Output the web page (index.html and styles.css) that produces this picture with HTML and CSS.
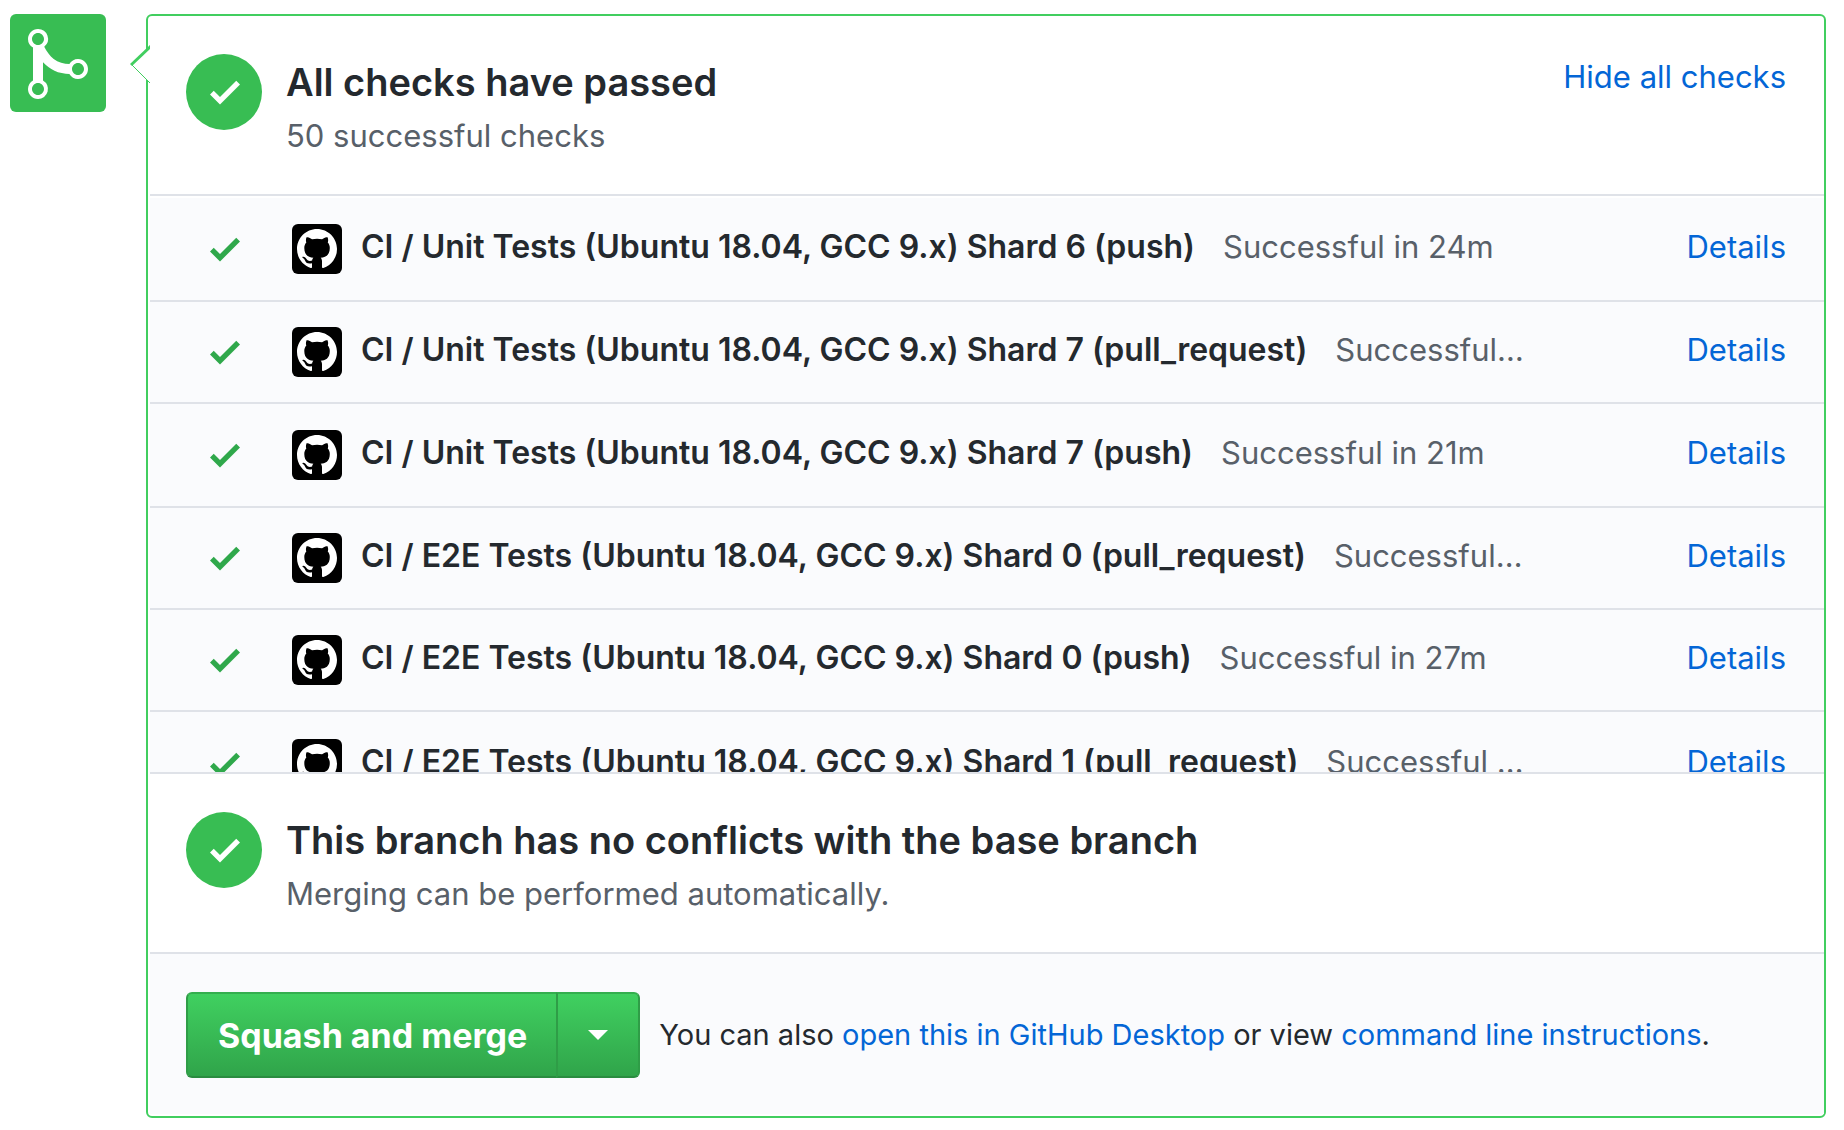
FILE: index.html
```html
<!DOCTYPE html>
<html lang="en">
<head>
<meta charset="utf-8">
<title>Merge status</title>
<link rel="stylesheet" href="styles.css">
</head>
<body>
<svg class="symbols" aria-hidden="true">
  <symbol id="check" viewBox="0 0 12 16"><path fill-rule="evenodd" d="M12 5l-8 8-4-4 1.500-1.500L4 10l6.500-6.500L12 5z"/></symbol>
  <symbol id="octocat" viewBox="0 0 16 16"><path fill-rule="evenodd" d="M8 0C3.580 0 0 3.580 0 8c0 3.540 2.290 6.530 5.470 7.590.4.070.55-.17.55-.38 0-.19-.01-.82-.01-1.490-2.010.37-2.530-.49-2.690-.94-.09-.23-.48-.94-.82-1.130-.28-.15-.68-.52-.01-.53.63-.01 1.080.58 1.230.82.72 1.210 1.870.87 2.330.66.07-.52.28-.87.51-1.070-1.780-.2-3.640-.89-3.640-3.950 0-.87.31-1.590.82-2.150-.08-.2-.36-1.020.08-2.120 0 0 .67-.21 2.200.82.64-.18 1.320-.27 2-.27.68 0 1.360.09 2 .27 1.530-1.040 2.200-.82 2.200-.82.44 1.100.16 1.920.08 2.120.51.56.82 1.270.82 2.150 0 3.070-1.870 3.750-3.650 3.950.29.25.54.73.54 1.480 0 1.070-.01 1.930-.01 2.200 0 .21.15.46.55.38A8.013 8.013 0 0 0 16 8c0-4.420-3.580-8-8-8z"/></symbol>
</svg>
<main class="timeline">
  <div class="merge-badge">
    <svg class="merge-icon" viewBox="0 0 12 16" aria-hidden="true"><path fill-rule="evenodd" d="M10 7c-.73 0-1.380.41-1.730 1.020V8C7.220 7.980 6 7.640 5.140 6.980c-.75-.58-1.500-1.610-1.890-2.440A1.993 1.993 0 0 0 2 .99C.89.99 0 1.890 0 3a2 2 0 0 0 1 1.720v6.560c-.59.35-1 .99-1 1.720 0 1.110.89 2 2 2a1.993 1.993 0 0 0 1-3.720V7.670c.67.7 1.440 1.270 2.300 1.690.86.42 2.030.63 2.970.64v-.02c.36.61 1 1.020 1.730 1.020 1.110 0 2-.89 2-2 0-1.110-.89-2-2-2zm-6.800 6c0 .66-.55 1.200-1.200 1.200-.65 0-1.200-.55-1.200-1.200 0-.65.55-1.200 1.200-1.200.65 0 1.200.55 1.200 1.200zM3.200 3c0 .66-.55 1.200-1.200 1.200-.65 0-1.200-.55-1.200-1.200 0-.65.55-1.200 1.200-1.200.65 0 1.200.55 1.200 1.200zM10 10.200c-.66 0-1.200-.55-1.200-1.200 0-.65.55-1.200 1.200-1.200.65 0 1.200.55 1.200 1.200 0 .65-.55 1.200-1.200 1.200z"/></svg>
  </div>
  <section class="panel">
    <svg class="pointer" viewBox="0 0 20 40" aria-hidden="true"><path class="pointer-fill" d="M20 2L1 20l19 19z"/><path class="pointer-top" d="M21 2L1 21"/><path class="pointer-bottom" d="M1 20l19 19"/></svg>
    <header class="status">
      <span class="status-icon"><svg viewBox="0 0 12 16" aria-hidden="true"><use href="#check"/></svg></span>
      <div class="status-text">
        <h2>All checks have passed</h2>
        <p>50 successful checks</p>
      </div>
      <button class="toggle" type="button">Hide all checks</button>
    </header>
    <ul class="checks">
      <li class="check"><svg class="check-icon" aria-hidden="true"><use href="#check"/></svg><span class="avatar"><svg aria-hidden="true"><use href="#octocat"/></svg></span><p class="check-text"><strong>CI / Unit Tests (Ubuntu 18.04, GCC 9.x) Shard 6 (push)</strong><span>Successful in 24m</span></p><a class="details" href="#">Details</a></li>
      <li class="check"><svg class="check-icon" aria-hidden="true"><use href="#check"/></svg><span class="avatar"><svg aria-hidden="true"><use href="#octocat"/></svg></span><p class="check-text"><strong>CI / Unit Tests (Ubuntu 18.04, GCC 9.x) Shard 7 (pull_request)</strong><span>Successful…</span></p><a class="details" href="#">Details</a></li>
      <li class="check"><svg class="check-icon" aria-hidden="true"><use href="#check"/></svg><span class="avatar"><svg aria-hidden="true"><use href="#octocat"/></svg></span><p class="check-text"><strong>CI / Unit Tests (Ubuntu 18.04, GCC 9.x) Shard 7 (push)</strong><span>Successful in 21m</span></p><a class="details" href="#">Details</a></li>
      <li class="check"><svg class="check-icon" aria-hidden="true"><use href="#check"/></svg><span class="avatar"><svg aria-hidden="true"><use href="#octocat"/></svg></span><p class="check-text"><strong>CI / E2E Tests (Ubuntu 18.04, GCC 9.x) Shard 0 (pull_request)</strong><span>Successful…</span></p><a class="details" href="#">Details</a></li>
      <li class="check"><svg class="check-icon" aria-hidden="true"><use href="#check"/></svg><span class="avatar"><svg aria-hidden="true"><use href="#octocat"/></svg></span><p class="check-text"><strong>CI / E2E Tests (Ubuntu 18.04, GCC 9.x) Shard 0 (push)</strong><span>Successful in 27m</span></p><a class="details" href="#">Details</a></li>
      <li class="check"><svg class="check-icon" aria-hidden="true"><use href="#check"/></svg><span class="avatar"><svg aria-hidden="true"><use href="#octocat"/></svg></span><p class="check-text"><strong>CI / E2E Tests (Ubuntu 18.04, GCC 9.x) Shard 1 (pull_request)</strong><span>Successful …</span></p><a class="details" href="#">Details</a></li>
    </ul>
    <div class="status">
      <span class="status-icon"><svg viewBox="0 0 12 16" aria-hidden="true"><use href="#check"/></svg></span>
      <div class="status-text">
        <h2>This branch has no conflicts with the base branch</h2>
        <p>Merging can be performed automatically.</p>
      </div>
    </div>
    <footer class="merge-bar">
      <div class="merge-buttons">
        <button class="merge" type="button">Squash and merge</button>
        <button class="merge-menu" type="button" aria-label="Select merge method"><span class="caret"></span></button>
      </div>
      <p>You can also <a href="#">open this in GitHub Desktop</a> or view <a href="#">command line instructions</a>.</p>
    </footer>
  </section>
</main>
</body>
</html>
```
FILE: styles.css
```css
* { box-sizing: border-box; }

body {
  margin: 0;
  background: #fff;
  color: #24292e;
  font-family: Inter, "Liberation Sans", sans-serif;
  font-size: 31px;
  line-height: 48px;
}

h2, p, ul { margin: 0; padding: 0; }

a { color: #0366d6; text-decoration: none; }

button { font-family: inherit; cursor: pointer; }

.symbols { display: none; }

.timeline {
  display: flex;
  align-items: flex-start;
  gap: 40px;
  padding: 14px 18px 12px 10px;
}

.merge-badge {
  display: flex;
  flex: none;
  justify-content: center;
  width: 96px;
  height: 98px;
  padding-top: 10px;
  border-radius: 6px;
  background: #38bd53;
}

.merge-icon { width: 60px; height: 80px; fill: #fff; }

.panel {
  position: relative;
  flex: 1;
  min-width: 0;
  padding: 0 0 2px 2px;
  border: 2px solid #41ce5f;
  border-radius: 6px;
}

.pointer {
  position: absolute;
  top: 28px;
  left: -18px;
  width: 20px;
  height: 40px;
  fill: none;
}

.pointer-fill { fill: #fff; }
.pointer-top { stroke: #41ce5f; stroke-width: 3; }
.pointer-bottom { stroke: #41ce5f; stroke-width: 1; }

.status {
  display: flex;
  align-items: flex-start;
  height: 178px;
  padding: 38px 38px 0 36px;
}

.status-icon {
  display: flex;
  flex: none;
  align-items: center;
  justify-content: center;
  width: 76px;
  height: 76px;
  margin-right: 24px;
  padding-left: 2px;
  border-radius: 50%;
  background: #38bd53;
}

.status-icon svg { width: 30px; height: 40px; fill: #fff; }

.status-text { flex: 1; min-width: 0; }

.status-text h2 { font-size: 38px; font-weight: 600; line-height: 56px; }

.status-text p { color: #586069; line-height: 52px; }

.toggle {
  padding: 0;
  border: 0;
  background: none;
  color: #0366d6;
  font-size: 31px;
  line-height: 46px;
}

.checks {
  height: 580px;
  overflow: hidden;
  border-top: 2px solid #dfe2e8;
  border-bottom: 2px solid #dfe2e8;
  background: #fafbfd;
  list-style: none;
}

.check {
  display: flex;
  align-items: center;
  height: 102px;
  padding: 0 38px 0 36px;
  border-bottom: 2px solid #dfe2e8;
}

.check:nth-child(3) { height: 104px; }
.check:first-child { height: 106px; border-top: 2px solid #fff; }
.check:last-child { height: 104px; border-bottom: 0; }

.check-icon { flex: none; width: 30px; height: 40px; margin: 0 52px 0 24px; fill: #2fa84b; }

.avatar {
  display: flex;
  flex: none;
  align-items: center;
  justify-content: center;
  width: 50px;
  height: 50px;
  margin-right: 19px;
  border-radius: 6px;
  background: #000;
}

.avatar svg { width: 40px; height: 40px; fill: #fff; }

.check-text { flex: 1; min-width: 0; overflow: hidden; white-space: nowrap; }
.check-text, .details { padding-bottom: 4px; }
.check-text strong { margin-right: 28px; font-size: 32px; font-weight: 600; }
.check-text span { color: #586069; }

.merge-bar {
  display: flex;
  align-items: center;
  gap: 19px;
  height: 162px;
  padding: 2px 38px 0 36px;
  border-top: 2px solid #dfe2e8;
  background: #fafbfd;
  font-size: 29px;
}

.merge-buttons { display: flex; flex: none; height: 86px; }

.merge, .merge-menu {
  border: 2px solid;
  border-color: #34ae4e #2f9d47 #2a8c40;
  background: linear-gradient(#40d060, #30a44a);
  color: #fff;
}

.merge {
  padding: 0 29px 0 30px;
  border-radius: 6px 0 0 6px;
  font-size: 34px;
  font-weight: 700;
}

.merge-menu {
  display: flex;
  align-items: center;
  justify-content: center;
  width: 84px;
  margin-left: -2px;
  border-radius: 0 6px 6px 0;
}

.caret { border: 10px solid transparent; border-top-color: #fff; border-bottom-width: 0; }
```
